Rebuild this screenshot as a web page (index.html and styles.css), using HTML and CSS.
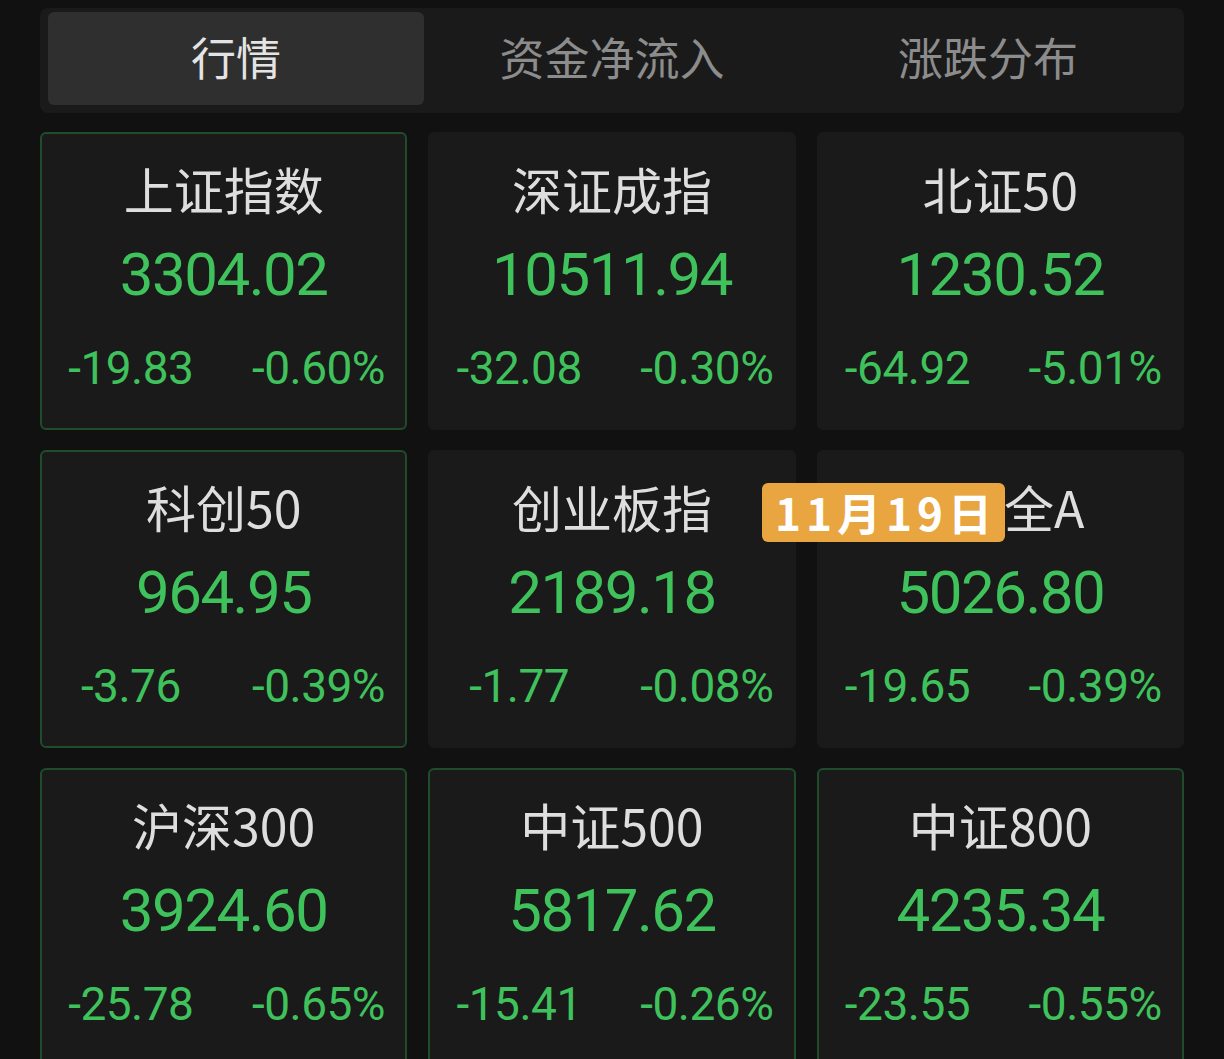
FILE: index.html
```html
<!DOCTYPE html>
<html lang="zh">
<head>
<meta charset="utf-8">
<link rel="stylesheet" href="styles.css">
</head>
<body>
<div class="page">
  <div class="tabs">
    <div class="tab active">行情</div>
    <div class="tab">资金净流入</div>
    <div class="tab">涨跌分布</div>
  </div>
  <div class="grid">
    <div class="card bordered">
      <div class="title">上证指数</div>
      <div class="price">3304.02</div>
      <div class="chg"><span>-19.83</span><span>-0.60%</span></div>
    </div>
    <div class="card">
      <div class="title">深证成指</div>
      <div class="price">10511.94</div>
      <div class="chg"><span>-32.08</span><span>-0.30%</span></div>
    </div>
    <div class="card">
      <div class="title">北证50</div>
      <div class="price">1230.52</div>
      <div class="chg"><span>-64.92</span><span>-5.01%</span></div>
    </div>
    <div class="card bordered">
      <div class="title">科创50</div>
      <div class="price">964.95</div>
      <div class="chg"><span>-3.76</span><span>-0.39%</span></div>
    </div>
    <div class="card">
      <div class="title">创业板指</div>
      <div class="price">2189.18</div>
      <div class="chg"><span>-1.77</span><span>-0.08%</span></div>
    </div>
    <div class="card">
      <div class="title covered">万得全A</div>
      <div class="price">5026.80</div>
      <div class="chg"><span>-19.65</span><span>-0.39%</span></div>
    </div>
    <div class="card bordered">
      <div class="title">沪深300</div>
      <div class="price">3924.60</div>
      <div class="chg"><span>-25.78</span><span>-0.65%</span></div>
    </div>
    <div class="card bordered">
      <div class="title">中证500</div>
      <div class="price">5817.62</div>
      <div class="chg"><span>-15.41</span><span>-0.26%</span></div>
    </div>
    <div class="card bordered">
      <div class="title">中证800</div>
      <div class="price">4235.34</div>
      <div class="chg"><span>-23.55</span><span>-0.55%</span></div>
    </div>
  </div>
  <div class="badge">11月19日</div>
</div>
</body>
</html>
```
FILE: styles.css
```css
html, body {
  margin: 0;
  padding: 0;
  background: #111111;
  height: 1059px;
  overflow: hidden;
}
.page {
  position: relative;
  padding: 8px 40px 0 40px;
  font-family: "Noto Sans CJK SC", "Noto Sans", sans-serif;
}
.tabs {
  display: grid;
  grid-template-columns: 1fr 1fr 1fr;
  background: #1a1a1a;
  border-radius: 8px;
  padding: 4px 8px 8px 8px;
  height: 93px;
}
.tab {
  display: flex;
  align-items: center;
  justify-content: center;
  font-size: 45px;
  color: #8c8c8c;
  border-radius: 6px;
  padding-bottom: 4px;
}
.tab.active {
  background: #2f2f2f;
  color: #e4e4e4;
}
.grid {
  margin-top: 19px;
  display: grid;
  grid-template-columns: repeat(3, 1fr);
  column-gap: 21px;
  row-gap: 20px;
}
.card {
  height: 298px;
  box-sizing: border-box;
  background: #1a1a1a;
  border: 2px solid #1a1a1a;
  border-radius: 6px;
  display: flex;
  flex-direction: column;
  align-items: center;
}
.card.bordered {
  border-color: #1f4d2c;
}
.title {
  margin-top: 24px;
  font-size: 50px;
  line-height: 60px;
  color: #dedede;
}
.title.covered {
  margin-right: 12px;
}
.price {
  margin-top: 22px;
  font-family: Roboto, "Noto Sans", sans-serif;
  font-size: 60px;
  line-height: 70px;
  letter-spacing: -1.5px;
  color: #3fc25c;
}
.chg {
  margin-top: 28px;
  width: 100%;
  display: grid;
  grid-template-columns: 1fr 1fr;
  font-family: Roboto, "Noto Sans", sans-serif;
  font-size: 46px;
  line-height: 60px;
  color: #3fc25c;
  letter-spacing: -0.5px;
}
.chg span {
  text-align: center;
}
.chg span:first-child {
  padding-right: 4px;
}
.chg span:last-child {
  padding-left: 8px;
}
.badge {
  position: absolute;
  left: 762px;
  top: 483px;
  width: 243px;
  height: 59px;
  box-sizing: border-box;
  padding-left: 5px;
  background: #e9a53f;
  border-radius: 6px;
  color: #ffffff;
  font-weight: 700;
  font-size: 44px;
  line-height: 59px;
  text-align: center;
  letter-spacing: 5px;
  white-space: nowrap;
}
```
